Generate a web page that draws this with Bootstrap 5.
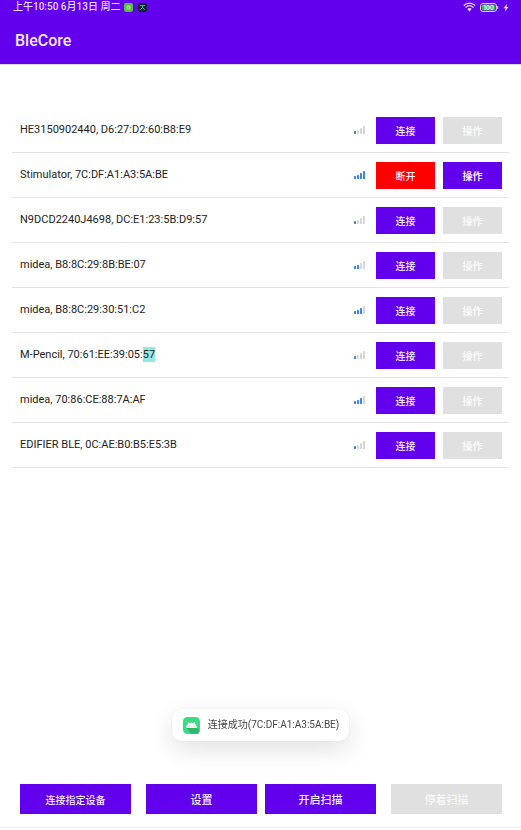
<!DOCTYPE html>
<html lang="zh-CN">
<head>
<meta charset="utf-8">
<meta name="viewport" content="width=device-width, initial-scale=1">
<title>BleCore</title>
<link href="https://cdn.jsdelivr.net/npm/bootstrap@5.3.0/dist/css/bootstrap.min.css" rel="stylesheet">
<style>
  :root { --brand: #6200ee; }
  body { font-family: Roboto, "Noto Sans CJK SC", sans-serif; font-size: 11px; line-height: 16px; color: #222; background: #fff; }
  .app-head { background: var(--brand); height: 64px; box-shadow: 0 1px 1px rgba(0,0,0,.15); }
  .status-line { height: 14px; padding: 0 12px 0 13px; color: #e9dcff; line-height: 14px; font-size: 10px; font-weight: 500; }
  .app-title { font-size: 16px; line-height: 20px; padding: 17px 15px 0; font-weight: 500; color: #f3ebff; }
  .device-list { padding: 44px 12px 0; }
  .device { height: 45px; padding: 0 7px 0 8px; gap: 8px; border-bottom: 1px solid #e4e4e4; }
  .device-name { font-size: 11px; }
  .hit { background: #93e9e2; color: inherit; padding: 1px 0; }
  .btn-flat { --bs-btn-color: #f4ecff; --bs-btn-bg: var(--brand); --bs-btn-hover-bg: #5300cc; --bs-btn-hover-color: #fff; --bs-btn-active-bg: #4b00b8; --bs-btn-active-color: #fff; --bs-btn-disabled-bg: #e0e0e0; --bs-btn-disabled-color: #f8f8f8; --bs-btn-disabled-opacity: 1; --bs-btn-border-width: 0; --bs-btn-padding-x: 0; --bs-btn-padding-y: 0; font-family: "Noto Sans CJK SC", sans-serif; font-weight: 500; }
  .btn-row { --bs-btn-font-size: 10px; width: 59px; height: 27px; }
  .btn-op { font-weight: 700; }
  .btn-stop { --bs-btn-bg: #f00; --bs-btn-hover-bg: #d80000; --bs-btn-active-bg: #c00000; }
  .actions { padding: 0 19px 13px 20px; gap: 8px; border-bottom: 1px solid #f0eef8; margin-bottom: 2px; }
  .pair { gap: 15px; flex: 1 1 0; }
  .btn-foot { --bs-btn-font-size: 11px; height: 30px; flex: 1 1 0; }
  .btn-compact { --bs-btn-font-size: 10px; }
  .signal { fill: #d6d6d6; margin-right: 3px; }
  .signal .on { fill: #3984ed; }
  .notice-wrap { bottom: 89px; }
  .notice { background: #fff; border-radius: 10px; height: 32px; padding: 0 10px 0 11px; gap: 8px; font-size: 10px; color: #444; box-shadow: 0 8px 24px rgba(0,0,0,.12), 0 0 2px rgba(0,0,0,.08); }
</style>
<script src="https://cdn.jsdelivr.net/npm/bootstrap@5.3.0/dist/js/bootstrap.bundle.min.js" defer></script>
</head>
<body class="min-vh-100 d-flex flex-column">
<header class="app-head">
  <div class="status-line d-flex align-items-center justify-content-between">
    <div class="d-flex align-items-center gap-1">
      <span>上午10:50 6月13日 周二</span>
      <svg width="9" height="9" viewBox="0 0 9 9" aria-hidden="true"><rect width="9" height="9" rx="2" fill="#58bd45"/><circle cx="4.5" cy="4.5" r="2.2" fill="#a9df9c"/><path d="M3.5 4h2M3.5 5.2h2" stroke="#58bd45" stroke-width=".6"/></svg>
      <svg width="10" height="9" viewBox="0 0 10 9" aria-hidden="true"><rect x="1" width="9" height="9" rx="2" fill="#10252f"/><path d="M3 2.600h5M5.500 2.600v2.200M3.300 6.600l2.200-2 2.200 2" stroke="#3fb9b1" fill="none"/></svg>
    </div>
    <div class="d-flex align-items-center gap-1">
      <svg width="13" height="10" viewBox="0 0 13 10" fill="none" stroke="#e9dcff" stroke-width="1.3" aria-label="Wi-Fi"><path d="M.7 3.500Q6.500-1.400 12.300 3.500M2.500 5.400Q6.500 2 10.500 5.400"/><path d="M4.300 7Q6.500 5.200 8.700 7L6.500 9.400Z" fill="#e9dcff" stroke="none"/></svg>
      <svg width="19" height="9" viewBox="0 0 19 9" aria-label="100"><rect x=".5" y=".5" width="16" height="8" rx="2.500" fill="#6200ee" stroke="#d9c6fa"/><rect x="1.500" y="1.500" width="14" height="6" rx="1.500" fill="#4fa944"/><path d="M17.700 3v3" stroke="#d9c6fa"/><text x="8.500" y="6.700" text-anchor="middle" font-family="Inter" font-size="6" font-weight="700" fill="#e8f6df">100</text></svg>
      <svg width="6" height="9" viewBox="0 0 6 9" aria-hidden="true"><path d="M4 1 .5 5.200h2L2 8.500 5.500 4h-2z" fill="#e9dcff"/></svg>
    </div>
  </div>
  <h1 class="app-title mb-0">BleCore</h1>
</header>

<main class="device-list flex-grow-1">
  <ul class="list-unstyled mb-0" id="devices"></ul>
</main>

<div class="notice-wrap position-fixed start-0 end-0 d-flex justify-content-center">
  <div class="notice d-flex align-items-center" role="status">
    <svg width="17" height="17" viewBox="0 0 17 17" aria-hidden="true"><rect width="17" height="17" rx="4.500" fill="#3ddc84"/><path d="M13.900 10.800 16.500 13.500A3.500 3.500 0 0 1 13 17H8L3.200 10.800z" fill="#2fb76b"/><path d="M3.100 10.900a5.400 5.100 0 0 1 10.800 0z" fill="#fff"/><path d="M5 5l1.300 2M12 5l-1.300 2" stroke="#fff" stroke-width=".7"/><circle cx="6.200" cy="9" r=".5" fill="#3ddc84"/><circle cx="10.800" cy="9" r=".5" fill="#3ddc84"/></svg>
    <span>连接成功(7C:DF:A1:A3:5A:BE)</span>
  </div>
</div>

<footer class="actions d-flex">
  <div class="pair d-flex">
    <button type="button" class="btn btn-flat btn-foot btn-compact rounded-0">连接指定设备</button>
    <button type="button" class="btn btn-flat btn-foot rounded-0">设置</button>
  </div>
  <div class="pair d-flex">
    <button type="button" class="btn btn-flat btn-foot rounded-0">开启扫描</button>
    <button type="button" class="btn btn-flat btn-foot rounded-0" disabled>停着扫描</button>
  </div>
</footer>

<script>
  const devices = [
    ['HE3150902440, D6:27:D2:60:B8:E9', 1],
    ['Stimulator, 7C:DF:A1:A3:5A:BE', 4, true],
    ['N9DCD2240J4698, DC:E1:23:5B:D9:57', 1],
    ['midea, B8:8C:29:8B:BE:07', 2],
    ['midea, B8:8C:29:30:51:C2', 3],
    ['M-Pencil, 70:61:EE:39:05:<mark class="hit">57</mark>', 1],
    ['midea, 70:86:CE:88:7A:AF', 3],
    ['EDIFIER BLE, 0C:AE:B0:B5:E5:3B', 1]
  ];
  const bars = n => [[0, 3], [3, 4], [6, 6], [9, 8]].map(([x, h], i) =>
    `<rect class="${i < n ? 'on' : ''}" x="${x}" y="${8 - h}" width="2" height="${h}" rx=".5"/>`).join('');
  document.getElementById('devices').innerHTML = devices.map(([name, level, linked]) => `
    <li class="device d-flex align-items-center">
      <span class="device-name flex-grow-1">${name}</span>
      <svg class="signal" width="11" height="8" viewBox="0 0 11 8" aria-label="${level}/4">${bars(level)}</svg>
      <button type="button" class="btn btn-flat btn-row rounded-0 ${linked ? 'btn-stop' : ''}">${linked ? '断开' : '连接'}</button>
      <button type="button" class="btn btn-flat btn-row btn-op rounded-0" ${linked ? '' : 'disabled'}>操作</button>
    </li>`).join('');
</script>
</body>
</html>
